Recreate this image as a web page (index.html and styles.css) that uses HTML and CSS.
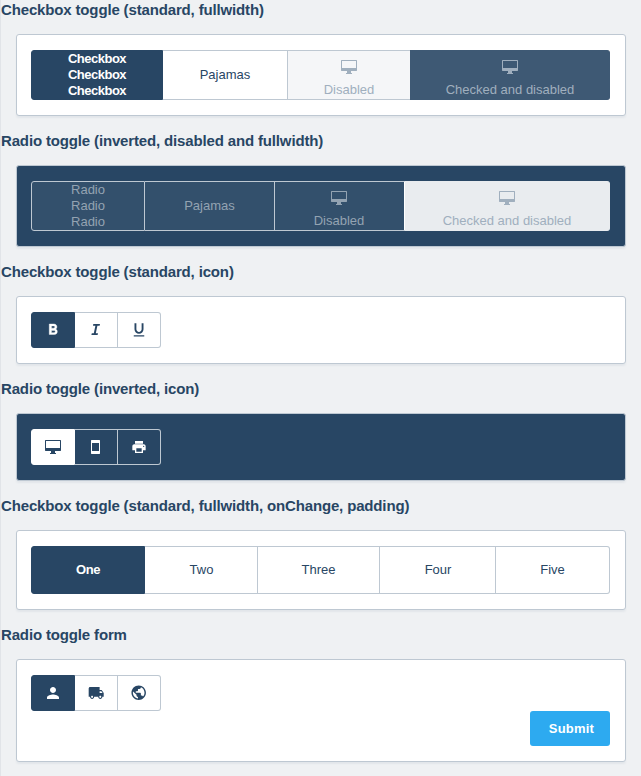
FILE: index.html
```html
<!DOCTYPE html>
<html lang="en">
<head>
<meta charset="utf-8">
<title>Toggles</title>
<link rel="stylesheet" href="styles.css">
</head>
<body>
<svg class="sprite" aria-hidden="true">
  <symbol id="desktop" viewBox="0 0 16 14"><path fill-rule="evenodd" d="M.5 0h15l.5.5v10l-.5.5H10v2h1v1H5v-1h1v-2H.5l-.5-.5V.5zM1 1v7h14V1z"/></symbol>
</svg>
<main class="page">
  <section class="example">
    <h2 class="title">Checkbox toggle (standard, fullwidth)</h2>
    <div class="card">
      <div class="toggle tall cols-a">
        <div class="option checked"><span>Checkbox<br>Checkbox<br>Checkbox</span></div>
        <div class="option">Pajamas</div>
        <div class="option disabled stacked"><svg class="desktop"><use href="#desktop"/></svg>Disabled</div>
        <div class="option checked disabled stacked"><svg class="desktop"><use href="#desktop"/></svg>Checked and disabled</div>
      </div>
    </div>
  </section>
  <section class="example">
    <h2 class="title">Radio toggle (inverted, disabled and fullwidth)</h2>
    <div class="card inverted">
      <div class="toggle tall cols-b">
        <div class="option disabled"><span>Radio<br>Radio<br>Radio</span></div>
        <div class="option disabled">Pajamas</div>
        <div class="option disabled stacked"><svg class="desktop"><use href="#desktop"/></svg>Disabled</div>
        <div class="option checked disabled stacked"><svg class="desktop"><use href="#desktop"/></svg>Checked and disabled</div>
      </div>
    </div>
  </section>
  <section class="example">
    <h2 class="title">Checkbox toggle (standard, icon)</h2>
    <div class="card">
      <div class="toggle icons">
        <div class="option checked"><svg class="icon heavy" viewBox="0 0 24 24"><path d="M15.600 10.790c.97-.67 1.650-1.770 1.650-2.790 0-2.260-1.750-4-4-4H7v14h7.040c2.090 0 3.710-1.700 3.710-3.790 0-1.520-.86-2.820-2.150-3.420zM10 6.500h3c.83 0 1.500.67 1.500 1.500s-.67 1.500-1.500 1.500h-3v-3zm3.500 9H10v-3h3.500c.83 0 1.500.67 1.500 1.500s-.67 1.500-1.500 1.500z"/></svg></div>
        <div class="option"><svg class="icon" viewBox="0 0 18 18"><path d="M6.300 3H13l-.4 1.700h-2.200l-1.600 7.600H11L10.600 14H4.400l.4-1.700h2L8.400 4.700H6z"/></svg></div>
        <div class="option"><svg class="icon" viewBox="0 0 24 24"><path d="M12 17c3.310 0 6-2.690 6-6V3h-2.500v8c0 1.930-1.570 3.500-3.500 3.500S8.500 12.930 8.500 11V3H6v8c0 3.310 2.690 6 6 6zm-7 2v1.500h14V19H5z"/></svg></div>
      </div>
    </div>
  </section>
  <section class="example">
    <h2 class="title">Radio toggle (inverted, icon)</h2>
    <div class="card inverted">
      <div class="toggle icons">
        <div class="option checked"><svg class="desktop"><use href="#desktop"/></svg></div>
        <div class="option"><svg class="phone" viewBox="0 0 9 14"><path fill-rule="evenodd" d="M.5 0h8l.5.5v13l-.5.5h-8l-.5-.5V.5zM1 3v8h7V3z"/></svg></div>
        <div class="option"><svg class="printer" viewBox="0 0 24 24"><path d="M19 8H5c-1.660 0-3 1.340-3 3v6h4v4h12v-4h4v-6c0-1.660-1.340-3-3-3zm-3 11H8v-5h8v5zm3-7c-.55 0-1-.45-1-1s.45-1 1-1 1 .45 1 1-.45 1-1 1zm-1-9H6v4h12V3z"/></svg></div>
      </div>
    </div>
  </section>
  <section class="example">
    <h2 class="title">Checkbox toggle (standard, fullwidth, onChange, padding)</h2>
    <div class="card">
      <div class="toggle padded cols-c">
        <div class="option checked">One</div>
        <div class="option">Two</div>
        <div class="option">Three</div>
        <div class="option">Four</div>
        <div class="option">Five</div>
      </div>
    </div>
  </section>
  <section class="example">
    <h2 class="title">Radio toggle form</h2>
    <form class="card">
      <div class="toggle icons">
        <div class="option checked"><svg class="icon" viewBox="0 0 24 24"><path d="M12 12c2.210 0 4-1.790 4-4s-1.790-4-4-4-4 1.790-4 4 1.790 4 4 4zm0 2c-2.670 0-8 1.340-8 4v2h16v-2c0-2.660-5.330-4-8-4z"/></svg></div>
        <div class="option"><svg class="truck" viewBox="0 0 24 24" preserveAspectRatio="none"><path d="M20 8h-3V4H3c-1.100 0-2 .9-2 2v11h2c0 1.660 1.340 3 3 3s3-1.340 3-3h6c0 1.660 1.340 3 3 3s3-1.340 3-3h2v-5l-3-4zM6 18.500c-.83 0-1.500-.67-1.500-1.500s.67-1.500 1.500-1.500 1.500.67 1.500 1.500-.67 1.500-1.500 1.500zm13.500-9l1.960 2.500H17V9.500h2.500zm-1.500 9c-.83 0-1.500-.67-1.500-1.500s.67-1.500 1.500-1.500 1.500.67 1.500 1.500-.67 1.500-1.500 1.500z"/></svg></div>
        <div class="option"><svg class="globe" viewBox="0 0 24 24"><path d="M12 2C6.480 2 2 6.480 2 12s4.480 10 10 10 10-4.480 10-10S17.520 2 12 2zm-1 17.930c-3.950-.49-7-3.850-7-7.930 0-.62.08-1.210.21-1.790L9 15v1c0 1.100.9 2 2 2v1.930zm6.900-2.540c-.26-.81-1-1.390-1.900-1.390h-1v-3c0-.55-.45-1-1-1H8v-2h2c.55 0 1-.45 1-1V7h2c1.100 0 2-.9 2-2v-.41c2.930 1.190 5 4.060 5 7.410 0 2.080-.8 3.970-2.100 5.390z"/></svg></div>
      </div>
      <button class="submit" type="button">Submit</button>
    </form>
  </section>
</main>
</body>
</html>
```
FILE: styles.css
```css
* { box-sizing: border-box; }
body {
  margin: 0;
  background: #eff1f3;
  color: #284664;
  font-family: "Liberation Sans", Arial, sans-serif;
}
.sprite { display: none; }
.page {
  height: 776px;
  padding: 1px 15px 0 0;
  border-left: 1px solid #e1e4e8;
  overflow: hidden;
}
.example { margin-bottom: 16px; }
.title {
  margin: 0 0 15px;
  font-size: 15px;
  line-height: 18px;
  font-weight: bold;
  letter-spacing: -.15px;
  white-space: nowrap;
}
.card {
  display: flex;
  flex-direction: column;
  align-items: flex-start;
  margin-left: 15px;
  padding: 15px 15px 15px 14px;
  border: 1px solid #bec8d2;
  border-radius: 3px;
  background: #fff;
  box-shadow: 0 2px 2px rgba(40, 70, 100, .06);
}
.toggle { display: grid; font-size: 13px; line-height: 16px; text-align: center; }
.tall { height: 50px; }
.padded { height: 48px; }
.icons { height: 36px; grid-template-columns: 44px 43px 43px; }
.cols-a { grid-template-columns: 132px 125px 122px 200px; }
.cols-b { grid-template-columns: 114px 130px 129px 206px; }
.cols-c { grid-template-columns: 114px 113px 122px 116px 114px; }
.option {
  display: flex;
  align-items: center;
  justify-content: center;
  border: solid #bec8d2;
  border-width: 1px 1px 1px 0;
  background: #fff;
  white-space: nowrap;
}
.option:first-child { border-left-width: 1px; border-radius: 3px 0 0 3px; }
.option:last-child { border-radius: 0 3px 3px 0; }
.option.checked {
  background: #284664;
  border-color: #284664;
  color: #fff;
  font-weight: bold;
  letter-spacing: -.5px;
}
.option.disabled { background: #f5f6f8; color: #a0afbe; font-weight: normal; letter-spacing: 0; }
.option.checked.disabled { background: #3e5974; border-color: #3e5974; padding-left: 1px; }
.tall .option:nth-child(3) { border-right: 0; }
.cols-b .option:nth-child(3) { padding-right: 1px; }
.cols-c .option:nth-child(even) { padding-left: 1px; }
.stacked { flex-direction: column; justify-content: flex-start; padding-top: 9px; }
.stacked svg { margin-bottom: 8px; }
.inverted { background: #284664; }
.inverted .option { background: #284664; color: #fff; }
.inverted .option.disabled { background: #33506c; color: #93a3b2; }
.inverted .option.checked { background: #fff; border-color: #fff; color: #284664; }
.inverted .option.checked.disabled {
  padding-left: 0;
  border-color: #e9ecef;
  border-left: 1px solid #fff;
  background: #e9ecef;
  color: #a0afbe;
}
.desktop { display: block; flex: none; width: 16px; height: 14px; fill: currentColor; }
.phone { display: block; width: 9px; height: 14px; margin-right: 1px; fill: currentColor; }
.printer { display: block; width: 16px; height: 16px; margin-right: 1px; fill: currentColor; }
.icon { display: block; width: 18px; height: 18px; fill: currentColor; }
.heavy { stroke: currentColor; stroke-width: .5; }
.truck { display: block; width: 16.4px; height: 18px; margin-left: 1px; fill: currentColor; }
.globe { display: block; width: 17.4px; height: 17.4px; fill: currentColor; }
.submit {
  align-self: flex-end;
  width: 80px;
  height: 35px;
  padding: 0 0 1px 3px;
  border: 0;
  border-radius: 3px;
  background: #2daaf0;
  color: #fff;
  font: bold 13px "Liberation Sans", Arial, sans-serif;
  letter-spacing: .2px;
}
```
